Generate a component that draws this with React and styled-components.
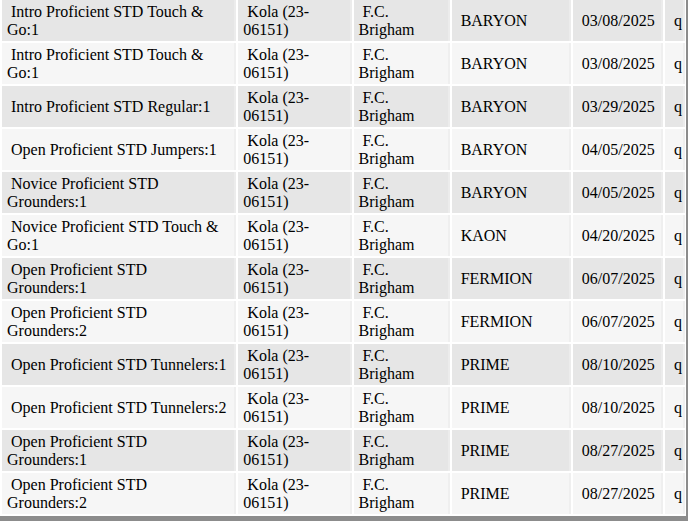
import React from "react";
import styled, { createGlobalStyle } from "styled-components";

const GlobalStyle = createGlobalStyle`
  html, body {
    margin: 0;
    padding: 0;
    background: #ffffff;
  }
  body {
    font-family: "Liberation Serif", "Times New Roman", Times, serif;
    font-size: 16px;
    color: #000;
  }
`;

const Frame = styled.div`
  width: 688px;
  height: 521px;
  box-sizing: border-box;
  overflow: hidden;
  border-right: 2px solid #8c8c8c;
  border-bottom: 5px solid #8c8c8c;
`;

const Table = styled.table`
  border-collapse: separate;
  border-spacing: 2px;
  table-layout: fixed;
  margin-top: -2px;
  width: 687px;
`;

const Row = styled.tr`
  background: ${(p) => (p.$odd ? "#e6e6e6" : "#f6f6f6")};
`;

const Cell = styled.td`
  height: 41px;
  box-sizing: border-box;
  padding: 2px 4px 2px 5px;
  vertical-align: middle;
  font-family: "Liberation Serif", "Times New Roman", Times, serif;
  font-size: 16px;
  line-height: 18px;
  color: #000;
  border-right: 2px solid ${(p) => (p.$odd ? "#ececec" : "#efefef")};
  white-space: normal;
`;

const cols = [234, 113, 96, 119, 90, 20];

const rows = [
  ["Intro Proficient STD Touch & Go:1", "BARYON", "03/08/2025"],
  ["Intro Proficient STD Touch & Go:1", "BARYON", "03/08/2025"],
  ["Intro Proficient STD Regular:1", "BARYON", "03/29/2025"],
  ["Open Proficient STD Jumpers:1", "BARYON", "04/05/2025"],
  ["Novice Proficient STD Grounders:1", "BARYON", "04/05/2025"],
  ["Novice Proficient STD Touch & Go:1", "KAON", "04/20/2025"],
  ["Open Proficient STD Grounders:1", "FERMION", "06/07/2025"],
  ["Open Proficient STD Grounders:2", "FERMION", "06/07/2025"],
  ["Open Proficient STD Tunnelers:1", "PRIME", "08/10/2025"],
  ["Open Proficient STD Tunnelers:2", "PRIME", "08/10/2025"],
  ["Open Proficient STD Grounders:1", "PRIME", "08/27/2025"],
  ["Open Proficient STD Grounders:2", "PRIME", "08/27/2025"],
];

const sp = "\u00a0";

export default function App() {
  return (
    <>
      <GlobalStyle />
      <Frame>
        <Table>
          <colgroup>
            {cols.map((w, i) => (
              <col key={i} style={{ width: w }} />
            ))}
          </colgroup>
          <tbody>
            {rows.map(([event, cls, date], i) => {
              const odd = i % 2 === 0;
              return (
                <Row key={i} $odd={odd}>
                  <Cell $odd={odd}>{sp + event}</Cell>
                  <Cell $odd={odd}>{sp + "Kola (23-06151)"}</Cell>
                  <Cell $odd={odd}>{sp + "F.C. Brigham"}</Cell>
                  <Cell $odd={odd}>{sp + cls}</Cell>
                  <Cell $odd={odd}>{sp + date}</Cell>
                  <Cell $odd={odd}>{sp + "q"}</Cell>
                </Row>
              );
            })}
          </tbody>
        </Table>
      </Frame>
    </>
  );
}
